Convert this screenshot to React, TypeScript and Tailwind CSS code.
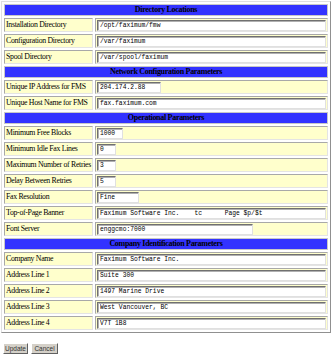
import React from 'react';

type Field = {
  label: string;
  value: string;
  width?: string; // input width class, full when missing
};

type Section = {
  title: string;
  fields: Field[];
};

const SECTIONS: Section[] = [
  {
    title: 'Directory Locations',
    fields: [
      { label: 'Installation Directory', value: '/opt/faximum/fmw' },
      { label: 'Configuration Directory', value: '/var/faximum' },
      { label: 'Spool Directory', value: '/var/spool/faximum' },
    ],
  },
  {
    title: 'Network Configuration Parameters',
    fields: [
      { label: 'Unique IP Address for FMS', value: '204.174.2.88', width: 'w-[64px]' },
      { label: 'Unique Host Name for FMS', value: 'fax.faximum.com' },
    ],
  },
  {
    title: 'Operational Parameters',
    fields: [
      { label: 'Minimum Free Blocks', value: '1000', width: 'w-[26px]' },
      { label: 'Minimum Idle Fax Lines', value: '0', width: 'w-[19px]' },
      { label: 'Maximum Number of Retries', value: '3', width: 'w-[19px]' },
      { label: 'Delay Between Retries', value: '5', width: 'w-[19px]' },
      { label: 'Fax Resolution', value: 'Fine', width: 'w-[42px]' },
      { label: 'Top-of-Page Banner', value: 'Faximum Software Inc.    tc      Page $p/$t' },
      { label: 'Font Server', value: 'enggcmo:7000', width: 'w-[156px]' },
    ],
  },
  {
    title: 'Company Identification Parameters',
    fields: [
      { label: 'Company Name', value: 'Faximum Software Inc.' },
      { label: 'Address Line 1', value: 'Suite 300' },
      { label: 'Address Line 2', value: '1497 Marine Drive' },
      { label: 'Address Line 3', value: 'West Vancouver, BC' },
      { label: 'Address Line 4', value: 'V7T 1B8' },
    ],
  },
];

const cell =
  'bg-[#ffffcc] border border-t-[#a8a8a8] border-l-[#a8a8a8] border-b-[#e4e4e4] border-r-[#e4e4e4] px-[1px] py-0 align-middle';

const btn =
  "h-[11px] bg-[#d4d0c8] border border-t-white border-l-white border-b-[#606060] border-r-[#606060] p-0 font-['Liberation_Sans',sans-serif] text-[6.5px] leading-[9px] text-[#333]";

const App: React.FC = () => {
  return (
    <div className="w-[332px] h-[355px] bg-white overflow-hidden pt-[1px] font-['Liberation_Serif',serif] text-black">
      <table className="ml-[1px] w-[330px] border-separate border-spacing-[2px] border border-t-[#e0e0e0] border-l-[#e0e0e0] border-b-[#909090] border-r-[#909090]">
        <tbody>
          {SECTIONS.map((section) => (
            <React.Fragment key={section.title}>
              <tr>
                <td
                  colSpan={2}
                  className="h-[12px] bg-[#3333ff] border border-[#c8c8c8] p-0 text-center text-[8px] tracking-[-0.3px] leading-[10px] font-bold"
                >
                  {section.title}
                </td>
              </tr>
              {section.fields.map((f) => (
                <tr key={f.label}>
                  <td className={`${cell} h-[14px] w-[86px] whitespace-nowrap text-[7.8px] tracking-[-0.3px] leading-[10px]`}>
                    {f.label}
                  </td>
                  <td className={`${cell} h-[14px]`}>
                    <input
                      readOnly
                      value={f.value}
                      className={`${f.width ?? 'w-full'} block h-[11px] bg-white border border-t-[#707070] border-l-[#707070] border-b-[#e0e0e0] border-r-[#e0e0e0] shadow-[inset_1px_1px_0_#b0b0b0] px-[2px] py-0 font-['Liberation_Mono',monospace] text-[6.3px] leading-[9px] text-black outline-none whitespace-pre`}
                    />
                  </td>
                </tr>
              ))}
            </React.Fragment>
          ))}
        </tbody>
      </table>

      <div className="mt-[10px] ml-[3px] flex gap-[3px]">
        <button className={`${btn} w-[25px]`}>Update</button>
        <button className={`${btn} w-[27px]`}>Cancel</button>
      </div>
    </div>
  );
};

export default App;
